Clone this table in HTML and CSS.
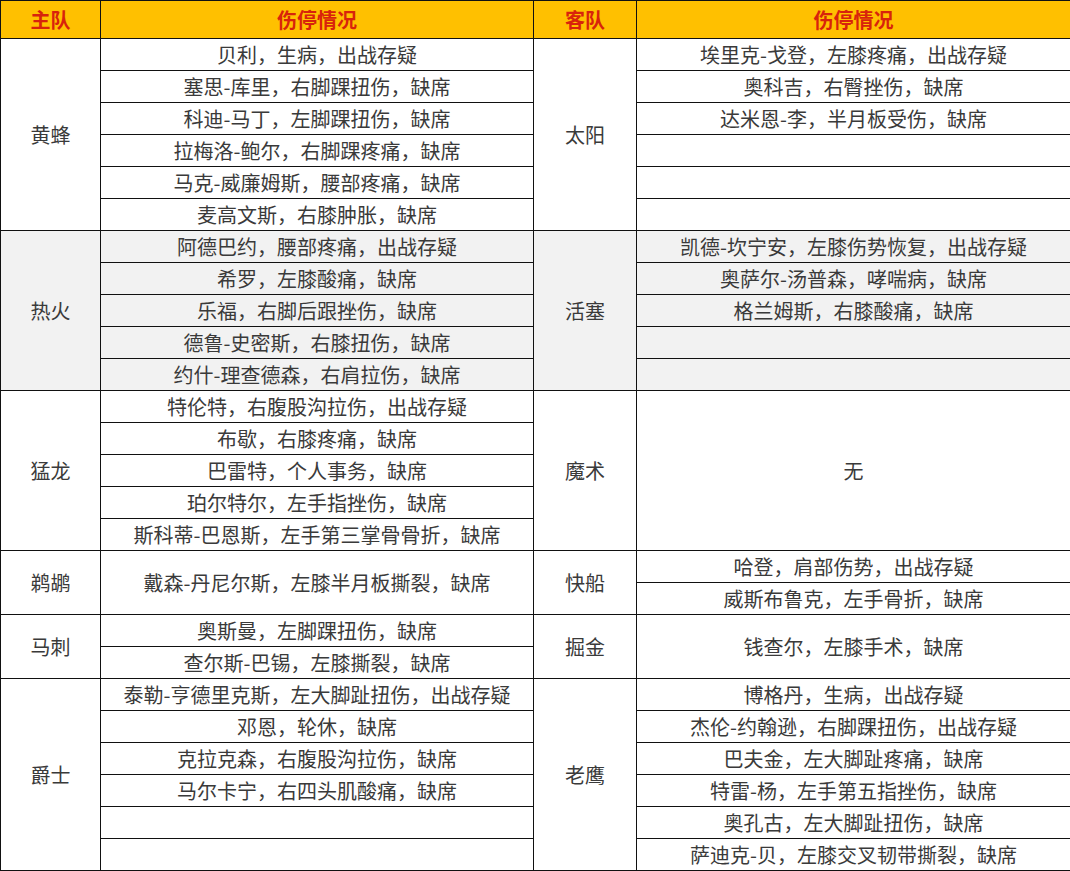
FILE: index.html
```html
<!DOCTYPE html>
<html lang="zh-CN">
<head>
<meta charset="utf-8">
<title>伤停情况</title>
<link rel="stylesheet" href="styles.css">
</head>
<body>
<table class="injury">
  <colgroup>
    <col class="c-team"><col class="c-info"><col class="c-team2"><col class="c-info2">
  </colgroup>
  <thead>
    <tr class="head">
      <th>主队</th><th>伤停情况</th><th>客队</th><th>伤停情况</th>
    </tr>
  </thead>
  <tbody>
    <tr><td rowspan="6">黄蜂</td><td>贝利，生病，出战存疑</td><td rowspan="6">太阳</td><td>埃里克-戈登，左膝疼痛，出战存疑</td></tr>
    <tr><td>塞思-库里，右脚踝扭伤，缺席</td><td>奥科吉，右臀挫伤，缺席</td></tr>
    <tr><td>科迪-马丁，左脚踝扭伤，缺席</td><td>达米恩-李，半月板受伤，缺席</td></tr>
    <tr><td>拉梅洛-鲍尔，右脚踝疼痛，缺席</td><td></td></tr>
    <tr><td>马克-威廉姆斯，腰部疼痛，缺席</td><td></td></tr>
    <tr><td>麦高文斯，右膝肿胀，缺席</td><td></td></tr>

    <tr class="shade"><td rowspan="5">热火</td><td>阿德巴约，腰部疼痛，出战存疑</td><td rowspan="5">活塞</td><td>凯德-坎宁安，左膝伤势恢复，出战存疑</td></tr>
    <tr class="shade"><td>希罗，左膝酸痛，缺席</td><td>奥萨尔-汤普森，哮喘病，缺席</td></tr>
    <tr class="shade"><td>乐福，右脚后跟挫伤，缺席</td><td>格兰姆斯，右膝酸痛，缺席</td></tr>
    <tr class="shade"><td>德鲁-史密斯，右膝扭伤，缺席</td><td></td></tr>
    <tr class="shade"><td>约什-理查德森，右肩拉伤，缺席</td><td></td></tr>

    <tr><td rowspan="5">猛龙</td><td>特伦特，右腹股沟拉伤，出战存疑</td><td rowspan="5">魔术</td><td rowspan="5">无</td></tr>
    <tr><td>布歇，右膝疼痛，缺席</td></tr>
    <tr><td>巴雷特，个人事务，缺席</td></tr>
    <tr><td>珀尔特尔，左手指挫伤，缺席</td></tr>
    <tr><td>斯科蒂-巴恩斯，左手第三掌骨骨折，缺席</td></tr>

    <tr><td rowspan="2">鹈鹕</td><td rowspan="2">戴森-丹尼尔斯，左膝半月板撕裂，缺席</td><td rowspan="2">快船</td><td>哈登，肩部伤势，出战存疑</td></tr>
    <tr><td>威斯布鲁克，左手骨折，缺席</td></tr>

    <tr><td rowspan="2">马刺</td><td>奥斯曼，左脚踝扭伤，缺席</td><td rowspan="2">掘金</td><td rowspan="2">钱查尔，左膝手术，缺席</td></tr>
    <tr><td>查尔斯-巴锡，左膝撕裂，缺席</td></tr>

    <tr><td rowspan="6">爵士</td><td>泰勒-亨德里克斯，左大脚趾扭伤，出战存疑</td><td rowspan="6">老鹰</td><td>博格丹，生病，出战存疑</td></tr>
    <tr><td>邓恩，轮休，缺席</td><td>杰伦-约翰逊，右脚踝扭伤，出战存疑</td></tr>
    <tr><td>克拉克森，右腹股沟拉伤，缺席</td><td>巴夫金，左大脚趾疼痛，缺席</td></tr>
    <tr><td>马尔卡宁，右四头肌酸痛，缺席</td><td>特雷-杨，左手第五指挫伤，缺席</td></tr>
    <tr><td></td><td>奥孔古，左大脚趾扭伤，缺席</td></tr>
    <tr><td></td><td>萨迪克-贝，左膝交叉韧带撕裂，缺席</td></tr>
  </tbody>
</table>
</body>
</html>
```

FILE: styles.css
```css
html, body {
  margin: 0;
  padding: 0;
  background: #ffffff;
}

.injury {
  border-collapse: collapse;
  table-layout: fixed;
  width: 1070px;
  font-family: "Noto Sans CJK SC", "Noto Sans", sans-serif;
  font-size: 20px;
  color: #3a3a3a;
}

.c-team { width: 100px; }
.c-info { width: 433px; }
.c-team2 { width: 103px; }
.c-info2 { width: 434px; }

.injury th,
.injury td {
  border: 1px solid #111111;
  padding: 0;
  text-align: center;
  vertical-align: middle;
  line-height: 20px;
  white-space: nowrap;
}

.injury th {
  background: #ffc000;
  color: #d8230c;
  font-weight: 700;
  height: 37px;
  font-size: 20px;
}

.injury td {
  height: 31px;
  font-weight: 400;
}

.shade td {
  background: #f2f2f2;
}
```
